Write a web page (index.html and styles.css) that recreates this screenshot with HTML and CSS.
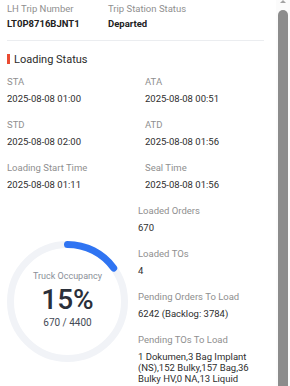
FILE: index.html
```html
<!DOCTYPE html>
<html>
<head>
<meta charset="utf-8">
<link rel="stylesheet" href="styles.css">
</head>
<body>
<div class="frame">
  <div class="panel">
    <div class="top">
      <div class="top-col first">
        <div class="label">LH Trip Number</div>
        <div class="value bold">LT0P8716BJNT1</div>
      </div>
      <div class="top-col">
        <div class="label">Trip Station Status</div>
        <div class="value bold">Departed</div>
      </div>
    </div>
    <div class="heading"><span class="mark"></span>Loading Status</div>
    <div class="grid">
      <div class="item"><div class="label">STA</div><div class="value">2025-08-08 01:00</div></div>
      <div class="item"><div class="label">ATA</div><div class="value">2025-08-08 00:51</div></div>
      <div class="item"><div class="label">STD</div><div class="value">2025-08-08 02:00</div></div>
      <div class="item"><div class="label">ATD</div><div class="value">2025-08-08 01:56</div></div>
      <div class="item"><div class="label">Loading Start Time</div><div class="value">2025-08-08 01:11</div></div>
      <div class="item"><div class="label">Seal Time</div><div class="value">2025-08-08 01:56</div></div>
    </div>
    <div class="bottom">
      <div class="gauge-col">
        <div class="gauge">
          <svg class="ring" width="121" height="121" viewBox="0 0 121 121">
            <circle cx="60.5" cy="60.5" r="57" fill="none" stroke="#f1f3f7" stroke-width="7"/>
            <circle cx="60.5" cy="60.5" r="57" fill="none" stroke="#2f74f2" stroke-width="7" stroke-linecap="round" stroke-dasharray="53.7 400" transform="rotate(-90 60.5 60.5)"/>
          </svg>
          <div class="gauge-text">
            <div class="g-label">Truck Occupancy</div>
            <div class="g-pct">15%</div>
            <div class="g-sub">670 / 4400</div>
          </div>
        </div>
      </div>
      <div class="stats">
        <div class="item"><div class="label">Loaded Orders</div><div class="value">670</div></div>
        <div class="item"><div class="label">Loaded TOs</div><div class="value">4</div></div>
        <div class="item"><div class="label">Pending Orders To Load</div><div class="value">6242 (Backlog: 3784)</div></div>
        <div class="item"><div class="label">Pending TOs To Load</div><div class="value">1 Dokumen,3 Bag Implant (NS),152 Bulky,157 Bag,36 Bulky HV,0 NA,13 Liquid</div></div>
      </div>
    </div>
  </div>
  <div class="scrollbar">
    <div class="arrow"></div>
    <div class="thumb"></div>
  </div>
</div>
</body>
</html>
```

FILE: styles.css
```css
* { box-sizing: border-box; }
html, body {
  margin: 0;
  padding: 0;
  background: #ffffff;
  overflow: hidden;
}
body {
  font-family: Roboto, "Liberation Sans", sans-serif;
  font-size: 9.5px;
  color: #333333;
}
.frame {
  display: flex;
  width: 290px;
  height: 386px;
  overflow: hidden;
}
.panel {
  width: 276px;
  padding: 2px 12px 0 7px;
}
.top {
  display: flex;
  padding-bottom: 11px;
  border-bottom: 1px solid #ebedf0;
}
.top-col.first { width: 101px; }
.label {
  line-height: 14px;
  color: #8f8f8f;
  font-size: 9.5px;
}
.top .label { margin-bottom: 2px; }
.value {
  line-height: 11px;
  color: #2e2e2e;
  font-size: 9.5px;
}
.value.bold {
  font-weight: 700;
  color: #222222;
}
.heading {
  display: flex;
  align-items: center;
  margin-top: 11px;
  height: 14px;
  font-size: 11px;
  color: #2b2b2b;
}
.mark {
  width: 3px;
  height: 10px;
  background: #ea4b32;
  margin-right: 4px;
}
.grid {
  margin-top: 9px;
  display: grid;
  grid-template-columns: 138px 1fr;
}
.item { margin-bottom: 14px; }
.item .label { margin-bottom: 4px; }
.bottom {
  display: flex;
}
.gauge-col {
  width: 131px;
  padding-top: 37px;
}
.gauge {
  position: relative;
  width: 121px;
  height: 121px;
}
.ring { display: block; }
.gauge-text {
  position: absolute;
  inset: 0;
  display: flex;
  flex-direction: column;
  align-items: center;
  padding-top: 29px;
}
.g-label {
  font-size: 9px;
  line-height: 12px;
  color: #8a8f99;
}
.g-pct {
  font-size: 28px;
  line-height: 30px;
  font-weight: 500;
  color: #2a2f3a;
  margin-top: 3px;
}
.g-sub {
  font-size: 10px;
  line-height: 12px;
  color: #444a55;
  margin-top: 2px;
}
.stats { flex: 1; }
.scrollbar {
  width: 14px;
  height: 386px;
  background: #fbfbfb;
  display: flex;
  flex-direction: column;
  align-items: flex-start;
  padding-left: 2px;
}
.arrow {
  width: 0;
  height: 0;
  margin-left: 2px;
  border-left: 3px solid transparent;
  border-right: 3px solid transparent;
  border-bottom: 3px solid #a3a3a3;
}
.thumb {
  margin-top: 7px;
  width: 10px;
  flex: 1;
  background: #8c8c8c;
  border-radius: 5px 5px 0 0;
}
```
